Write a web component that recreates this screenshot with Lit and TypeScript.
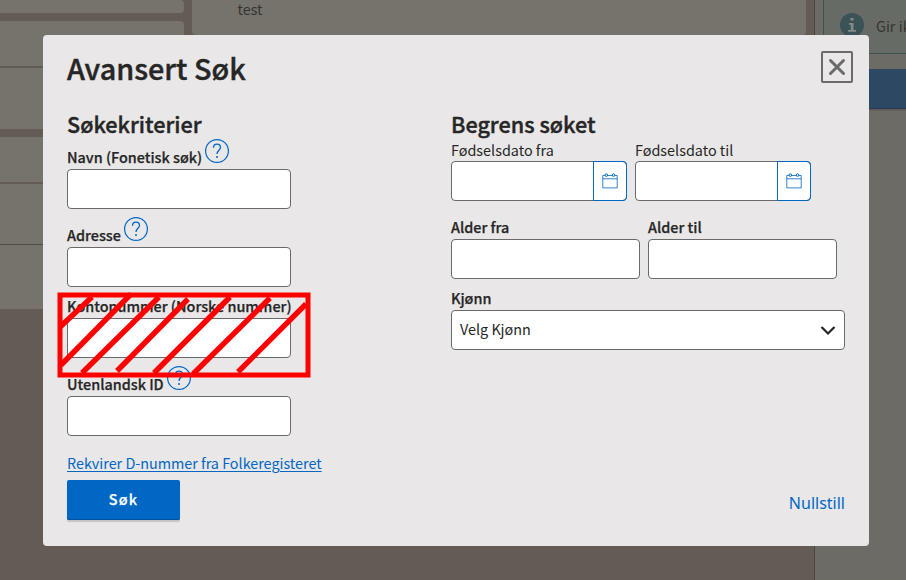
import { LitElement, html, css, svg } from "lit";
import { customElement, property } from "lit/decorators.js";

@customElement("help-icon")
class HelpIcon extends LitElement {
  static styles = css`
    :host { display: block; width: 24px; height: 24px; }
    svg { display: block; }
  `;
  render() {
    return html`<svg width="24" height="24" viewBox="0 0 24 24" fill="none" stroke="#0067c5" stroke-width="1.2">
      <circle cx="12" cy="12" r="11.4"></circle>
      <path d="M8.5 8.7C8.5 6.6 10 5.1 12 5.1s3.5 1.4 3.5 3.3c0 2.8-3.5 2.9-3.5 6.6" stroke-width="1.3"></path>
      <circle cx="12" cy="18" r="1" fill="#0067c5" stroke="none"></circle>
    </svg>`;
  }
}

@customElement("form-field")
class FormField extends LitElement {
  @property() label = "";
  @property({ type: Boolean }) help = false;
  @property({ type: Boolean }) date = false;
  static styles = css`
    :host { display: block; }
    .head { display: flex; align-items: flex-end; gap: 3px; height: 20px; line-height: 20px; font-weight: 500; font-size: 14.4px; white-space: nowrap; -webkit-text-stroke: 0.25px; }
    .head span { display: block; height: 20px; }
    .head.light { font-weight: 400; -webkit-text-stroke: 0; }
    help-icon { margin-bottom: 4px; }
    .box { display: flex; box-sizing: border-box; height: 40px; margin-top: 2px; background: #fff; border: 1px solid #6a6a6a; border-radius: 4px; }
    .head.light + .box { margin-top: 1px; }
    .date { margin: -1px -1px -1px auto; width: 34px; box-sizing: border-box; border: 1px solid #0067c5; border-radius: 0 4px 4px 0; display: flex; align-items: center; justify-content: center; }
  `;
  render() {
    return html`
      <div class="head ${this.date ? "light" : ""}"><span>${this.label}</span>${this.help ? html`<help-icon></help-icon>` : ""}</div>
      <div class="box">${this.date
        ? html`<div class="date"><svg width="16" height="16" viewBox="0 0 16 16" fill="none" stroke="#0067c5" stroke-width="1">
            <path d="M3 2.5H.8v12.4h14.4V2.5H13M5.5 2.5h5M.8 5.8h14.4" stroke-opacity=".8"></path>
            <circle cx="4.3" cy="2.1" r="1.3"></circle><circle cx="11.5" cy="2.1" r="1.3"></circle>
          </svg></div>`
        : ""}</div>`;
  }
}

@customElement("app-root")
class AppRoot extends LitElement {
  static styles = css`
    :host { display: block; position: relative; width: 906px; height: 580px; overflow: hidden; background: #635b54; color: #262626; font-family: "Noto Sans CJK SC", "Noto Sans", sans-serif; font-size: 14.4px; }
    .page { display: grid; grid-template-columns: 184px 614px 1fr; column-gap: 8px; height: 580px; color: #37342f; }
    .cards { display: flex; flex-direction: column; gap: 8px; }
    .card { background: #76736d; border-radius: 0 4px 4px 0; }
    .c1 { height: 13px; }
    .c2 { height: 108px; }
    .c3 { height: 172px; }
    .r1 { height: 45px; border-bottom: 2px solid #635b54; }
    .r2 { height: 60px; border-bottom: 1px solid #544c46; }
    .mid { background: #76736d; height: 35px; border-radius: 0 0 4px 4px; line-height: 18px; padding-left: 45.5px; box-sizing: border-box; }
    .side { min-width: 0; background: #6d6b66; border-left: 1px solid #4b443e; }
    .alert { display: flex; align-items: center; gap: 12px; height: 54px; box-sizing: border-box; margin-left: 8px; padding: 0 0 3px 16px; background: #676b66; border-left: 1px solid #3f5153; border-bottom: 1px solid #3f5153; white-space: nowrap; }
    .alert svg { flex: none; }
    .action { height: 39px; margin-top: 15px; background: #2d4862; border-bottom: 1px solid #24394d; box-shadow: 0 2px #625e59; }
    .modal { position: absolute; left: 43px; top: 35px; width: 826px; height: 511px; box-sizing: border-box; background: #e9e7e7; border-radius: 4px; padding: 16px 24px; }
    .top { display: flex; justify-content: space-between; margin-right: -8px; }
    h1, h2 { font-weight: 500; -webkit-text-stroke: 0.4px; }
    h1 { margin: 0; font-size: 28.8px; line-height: 34px; height: 36px; }
    h2 { margin: 0 0 1px; font-size: 21.6px; line-height: 26px; height: 28px; }
    .left h2 { margin-bottom: 8px; }
    .close { width: 32px; height: 32px; }
    .close svg, .chev { display: block; }
    .cols { display: grid; grid-template-columns: 224px 394px; column-gap: 160px; margin-top: 24px; }
    .left, .right { display: flex; flex-direction: column; }
    .left form-field { margin-bottom: 16px; }
    .left form-field.tight { margin-bottom: 9px; }
    .pair { display: flex; gap: 8px; }
    .pair.dates { margin-bottom: 16px; }
    .pair.dates form-field { width: 176px; }
    .pair.ages form-field { width: 189px; }
    .label { font-weight: 500; line-height: 20px; margin-top: 9px; -webkit-text-stroke: 0.25px; }
    .select { display: flex; align-items: center; justify-content: space-between; box-sizing: border-box; height: 40px; margin-top: 2px; padding: 0 8px; background: #fff; border: 1px solid #6a6a6a; border-radius: 4px; line-height: 20px; }
    .select span { margin-top: -2px; }
    .link { align-self: flex-start; color: #0067c5; line-height: 22px; height: 20px; letter-spacing: -0.02px; white-space: nowrap; text-decoration: underline 1px; text-underline-offset: 2px; }
    .foot { display: flex; justify-content: space-between; margin-top: 8px; }
    .search { width: 113px; height: 40px; line-height: 38px; box-sizing: border-box; text-align: center; background: #0067c5; color: #fff; border-radius: 2px; font-weight: 500; letter-spacing: 1.2px; -webkit-text-stroke: 0.25px; box-shadow: inset 0 -1px #00509e, 0 2px 1px #c5c3c3; }
    .reset { color: #0067c5; font: 16px/46px "Noto Sans", sans-serif; }
    .strike { position: absolute; left: 14px; top: 255px; }
  `;
  render() {
    const strokes = ["60 327 92 297", "61 365 131 294", "82 373 159 297", "117 371 188 299", "154 373 230 297", "193 374 270 298", "238 372 306 304"];
    return html`
      <div class="page">
        <div class="cards">
          <div class="card c1"></div>
          <div class="card c2"><div class="r1"></div></div>
          <div class="card c3"><div class="r1"></div><div class="r2"></div></div>
        </div>
        <div class="mid">test</div>
        <div class="side">
          <div class="alert">
            <svg width="24" height="24" viewBox="0 0 24 24"><circle cx="12" cy="12" r="12" fill="#3b5257"></circle><path d="M10.5 5h3v2.5h-3zM9 10h4.5v7H16v1.8H8V17h2.8v-5.2H9z" fill="#858b88"></path></svg>
            <span>Gir ikke</span>
          </div>
          <div class="action"></div>
        </div>
      </div>
      <div class="modal">
        <div class="top">
          <h1>Avansert Søk</h1>
          <svg class="close" viewBox="0 0 32 32" fill="none" stroke="#6a6a6a"><rect x="1" y="1" width="30" height="30" rx="1" stroke-width="2"></rect><path d="M9.5 9.5l13 13M22.5 9.5l-13 13" stroke-width="3" stroke-linecap="round"></path></svg>
        </div>
        <div class="cols">
          <div class="left">
            <h2>Søkekriterier</h2>
            <form-field label="Navn (Fonetisk søk)" help></form-field>
            <form-field label="Adresse" help class="tight"></form-field>
            <form-field label="Kontonummer (Norske nummer)"></form-field>
            <form-field label="Utenlandsk ID" help></form-field>
            <div class="link">Rekvirer D-nummer fra Folkeregisteret</div>
          </div>
          <div class="right">
            <h2>Begrens søket</h2>
            <div class="pair dates"><form-field label="Fødselsdato fra" date></form-field><form-field label="Fødselsdato til" date></form-field></div>
            <div class="pair ages"><form-field label="Alder fra"></form-field><form-field label="Alder til"></form-field></div>
            <div class="label">Kjønn</div>
            <div class="select"><span>Velg Kjønn</span><svg class="chev" width="16" height="16" viewBox="0 0 16 16" fill="none" stroke="#262626" stroke-width="2.2"><path d="M1.5 5L8 11.5 14.5 5"></path></svg></div>
          </div>
        </div>
        <div class="foot"><div class="search">Søk</div><div class="reset">Nullstill</div></div>
        <svg class="strike" width="256" height="90" viewBox="57 290 256 90" fill="none" stroke="#f00">
          <rect x="60" y="295" width="248" height="80" stroke-width="5"></rect>
          ${strokes.map((s) => svg`<path d="M${s}" stroke-width="5.4"></path>`)}
        </svg>
      </div>`;
  }
}
